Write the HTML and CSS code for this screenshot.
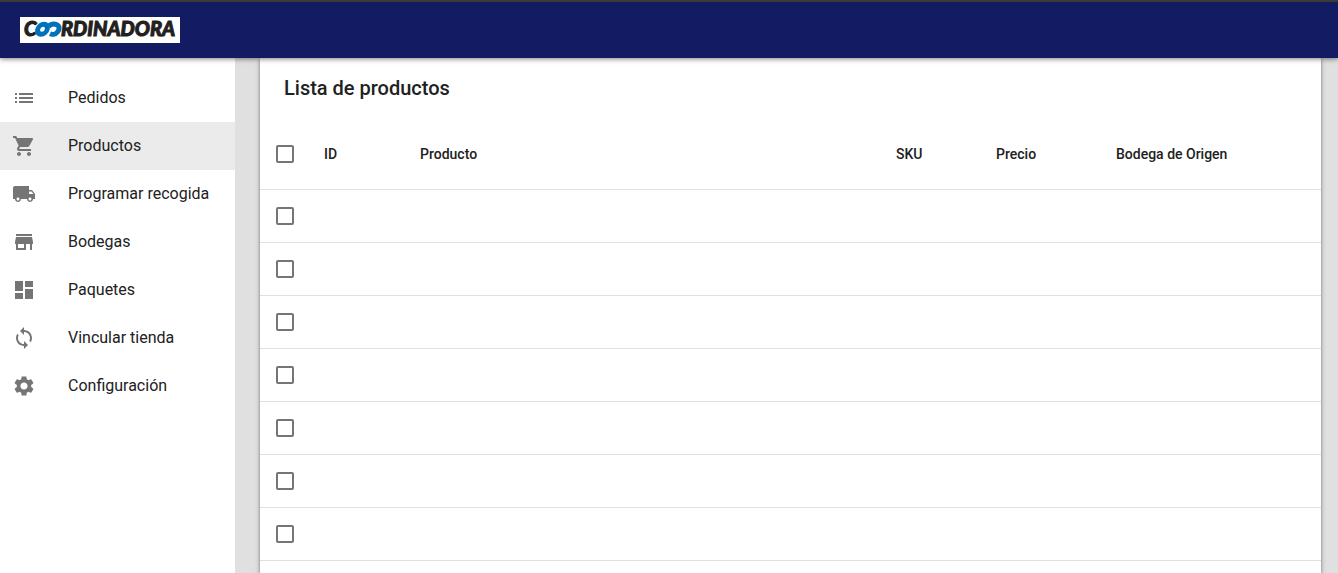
FILE: index.html
```html
<!DOCTYPE html>
<html lang="es">
<head>
<meta charset="utf-8">
<meta name="viewport" content="width=device-width, initial-scale=1">
<title>Lista de productos</title>
<link rel="stylesheet" href="styles.css">
</head>
<body>
<header class="topbar">
  <a class="logo" href="#" aria-label="Coordinadora">
    <svg width="160" height="26" viewBox="0 0 160 26">
      <text class="logo-text" x="4" y="19">C</text>
      <g class="logo-rings">
        <ellipse cx="22.500" cy="12.300" rx="4.800" ry="5" transform="translate(2.600 0) skewX(-12)"/>
        <path d="M28.500 9.500C30.500 7.200 34 6.600 36.500 7.600C40 9 39.500 12.500 37.500 15C35.500 17.500 32 17.700 30 16.800"/>
      </g>
      <text class="logo-text" x="41" y="19">RDINADORA</text>
    </svg>
  </a>
</header>
<div class="shell">
  <nav class="sidebar">
    <a class="item" href="#"><svg class="icon" viewBox="0 0 24 24"><path d="M3 13h2v-2H3v2zm0 4h2v-2H3v2zm0-8h2V7H3v2zm4 4h14v-2H7v2zm0 4h14v-2H7v2zM7 7v2h14V7H7z"/></svg><span>Pedidos</span></a>
    <a class="item selected" href="#" aria-current="page"><svg class="icon" viewBox="0 0 24 24"><path d="M7 18c-1.100 0-1.990.9-1.990 2S5.900 22 7 22s2-.9 2-2-.9-2-2-2zM1 2v2h2l3.600 7.590-1.350 2.450c-.16.28-.25.61-.25.96 0 1.100.9 2 2 2h12v-2H7.420c-.14 0-.25-.11-.25-.25l.03-.12.9-1.630h7.450c.75 0 1.410-.41 1.750-1.030l3.580-6.490c.08-.14.12-.31.12-.48 0-.55-.45-1-1-1H5.210l-.94-2H1zm16 16c-1.100 0-1.990.9-1.990 2s.89 2 1.990 2 2-.9 2-2-.9-2-2-2z"/></svg><span>Productos</span></a>
    <a class="item" href="#"><svg class="icon" viewBox="0 0 24 24"><path d="M20 8h-3V4H3c-1.100 0-2 .9-2 2v11h2c0 1.660 1.340 3 3 3s3-1.340 3-3h6c0 1.660 1.340 3 3 3s3-1.340 3-3h2v-5l-3-4zM6 18.500c-.83 0-1.500-.67-1.500-1.500s.67-1.500 1.500-1.500 1.500.67 1.500 1.500-.67 1.500-1.500 1.500zm13.500-9l1.960 2.500H17V9.500h2.500zm-1.500 9c-.83 0-1.500-.67-1.500-1.500s.67-1.500 1.500-1.500 1.500.67 1.500 1.500-.67 1.500-1.500 1.500z"/></svg><span>Programar recogida</span></a>
    <a class="item" href="#"><svg class="icon" viewBox="0 0 24 24"><path d="M20 4H4v2h16V4zm1 10v-2l-1-5H4l-1 5v2h1v6h10v-6h4v6h2v-6h1zm-9 4H6v-4h6v4z"/></svg><span>Bodegas</span></a>
    <a class="item" href="#"><svg class="icon" viewBox="0 0 24 24"><path d="M3 13h8V3H3v10zm0 8h8v-6H3v6zm10 0h8V11h-8v10zm0-18v6h8V3h-8z"/></svg><span>Paquetes</span></a>
    <a class="item" href="#"><svg class="icon" viewBox="0 0 24 24"><path d="M12 4V1L8 5l4 4V6c3.310 0 6 2.690 6 6 0 1.010-.25 1.970-.7 2.800l1.460 1.460C19.540 15.030 20 13.570 20 12c0-4.420-3.580-8-8-8zm0 14c-3.310 0-6-2.690-6-6 0-1.010.25-1.970.7-2.800L5.240 7.740C4.460 8.970 4 10.430 4 12c0 4.420 3.580 8 8 8v3l4-4-4-4v3z"/></svg><span>Vincular tienda</span></a>
    <a class="item" href="#"><svg class="icon" viewBox="0 0 24 24"><path d="M19.140 12.940c.04-.3.060-.61.060-.94 0-.32-.02-.64-.07-.94l2.030-1.580c.18-.14.23-.41.12-.61l-1.920-3.320c-.12-.22-.37-.29-.59-.22l-2.390.96c-.5-.38-1.030-.7-1.620-.94l-.36-2.540c-.04-.24-.24-.41-.48-.41h-3.840c-.24 0-.43.17-.47.41l-.36 2.540c-.59.24-1.130.57-1.620.94l-2.390-.96c-.22-.08-.47 0-.59.22L2.740 8.870c-.12.21-.08.47.12.61l2.030 1.580c-.05.3-.09.63-.09.94s.02.64.07.94l-2.030 1.580c-.18.14-.23.41-.12.61l1.920 3.320c.12.22.37.29.59.22l2.390-.96c.5.38 1.030.7 1.620.94l.36 2.540c.05.24.24.41.48.41h3.840c.24 0 .44-.17.47-.41l.36-2.540c.59-.24 1.130-.56 1.620-.94l2.390.96c.22.08.47 0 .59-.22l1.920-3.320c.12-.22.07-.47-.12-.61l-2.010-1.580zM12 15.600c-1.980 0-3.600-1.620-3.600-3.600s1.620-3.600 3.600-3.600 3.600 1.620 3.600 3.600-1.620 3.600-3.600 3.600z"/></svg><span>Configuración</span></a>
  </nav>
  <main class="content">
    <section class="card">
      <h1 class="title">Lista de productos</h1>
      <table class="table">
        <colgroup><col class="col-check"><col class="col-id"><col><col class="col-sku"><col class="col-price"><col class="col-store"></colgroup>
        <thead>
          <tr><th><input class="check" type="checkbox" aria-label="Seleccionar todos"></th><th scope="col">ID</th><th scope="col">Producto</th><th scope="col">SKU</th><th scope="col">Precio</th><th scope="col">Bodega de Origen</th></tr>
        </thead>
        <tbody>
          <tr><td><input class="check" type="checkbox" aria-label="Seleccionar fila 1"></td><td></td><td></td><td></td><td></td><td></td></tr>
          <tr><td><input class="check" type="checkbox" aria-label="Seleccionar fila 2"></td><td></td><td></td><td></td><td></td><td></td></tr>
          <tr><td><input class="check" type="checkbox" aria-label="Seleccionar fila 3"></td><td></td><td></td><td></td><td></td><td></td></tr>
          <tr><td><input class="check" type="checkbox" aria-label="Seleccionar fila 4"></td><td></td><td></td><td></td><td></td><td></td></tr>
          <tr><td><input class="check" type="checkbox" aria-label="Seleccionar fila 5"></td><td></td><td></td><td></td><td></td><td></td></tr>
          <tr><td><input class="check" type="checkbox" aria-label="Seleccionar fila 6"></td><td></td><td></td><td></td><td></td><td></td></tr>
          <tr><td><input class="check" type="checkbox" aria-label="Seleccionar fila 7"></td><td></td><td></td><td></td><td></td><td></td></tr>
        </tbody>
      </table>
    </section>
  </main>
</div>
</body>
</html>
```
FILE: styles.css
```css
* {
  box-sizing: border-box;
}

body {
  margin: 0;
  min-height: 100vh;
  display: flex;
  flex-direction: column;
  background: #e0e0e0;
  color: #212121;
  font-family: Roboto, "Liberation Sans", sans-serif;
  font-size: 16px;
  line-height: 24px;
}

.topbar {
  position: relative;
  z-index: 1;
  flex: none;
  display: flex;
  padding: 15px 20px;
  border-top: 2px solid #3a3a3a;
  background: #131b62;
  box-shadow: 0 1px 5px rgba(0, 0, 0, 0.5);
}

.logo {
  display: block;
  height: 26px;
  background: #fff;
}

.logo svg {
  display: block;
}

.logo-text {
  font-family: Lato, "Liberation Sans", sans-serif;
  font-size: 20px;
  font-weight: 900;
  font-style: italic;
  fill: #231f20;
  stroke: #231f20;
  stroke-width: 1px;
}

.logo-rings {
  fill: none;
  stroke: #0072bc;
  stroke-width: 5px;
}

.shell {
  flex: 1;
  display: flex;
}

.sidebar {
  flex: none;
  width: 236px;
  padding-top: 16px;
  background: #fff;
  border-right: 1px solid #e0e0e0;
}

.item {
  display: flex;
  align-items: center;
  gap: 32px;
  height: 48px;
  padding: 0 12px;
  color: #212121;
  text-decoration: none;
  white-space: nowrap;
}

.item.selected {
  background: #ebebeb;
}

.icon {
  flex: none;
  width: 24px;
  height: 24px;
  fill: #757575;
}

.content {
  flex: 1;
  min-width: 0;
  display: flex;
  padding: 0 17px 0 24px;
}

.card {
  flex: 1;
  min-width: 0;
  background: #fff;
  box-shadow: 0 1px 3px rgba(0, 0, 0, 0.4), 0 2px 6px rgba(0, 0, 0, 0.16);
}

.title {
  margin: 0;
  padding: 18px 24px;
  font-size: 20px;
  font-weight: 500;
  line-height: 24px;
}

.table {
  width: 100%;
  table-layout: fixed;
  border-collapse: separate;
  border-spacing: 0;
  font-size: 14px;
}

.table th,
.table td {
  height: 53px;
  padding: 0 16px;
  border-bottom: 1px solid #e0e0e0;
  font-weight: 500;
  text-align: left;
  white-space: nowrap;
}

.table thead th {
  height: 72px;
}

.col-check {
  width: 48px;
}

.col-id {
  width: 96px;
}

.col-sku {
  width: 100px;
}

.col-price {
  width: 120px;
}

.col-store {
  width: 221px;
}

.check {
  appearance: none;
  display: block;
  width: 18px;
  height: 18px;
  margin: 0;
  border: 2px solid #757575;
  border-radius: 2px;
  background: #fff;
}

.check:checked {
  background: #757575;
}
```
